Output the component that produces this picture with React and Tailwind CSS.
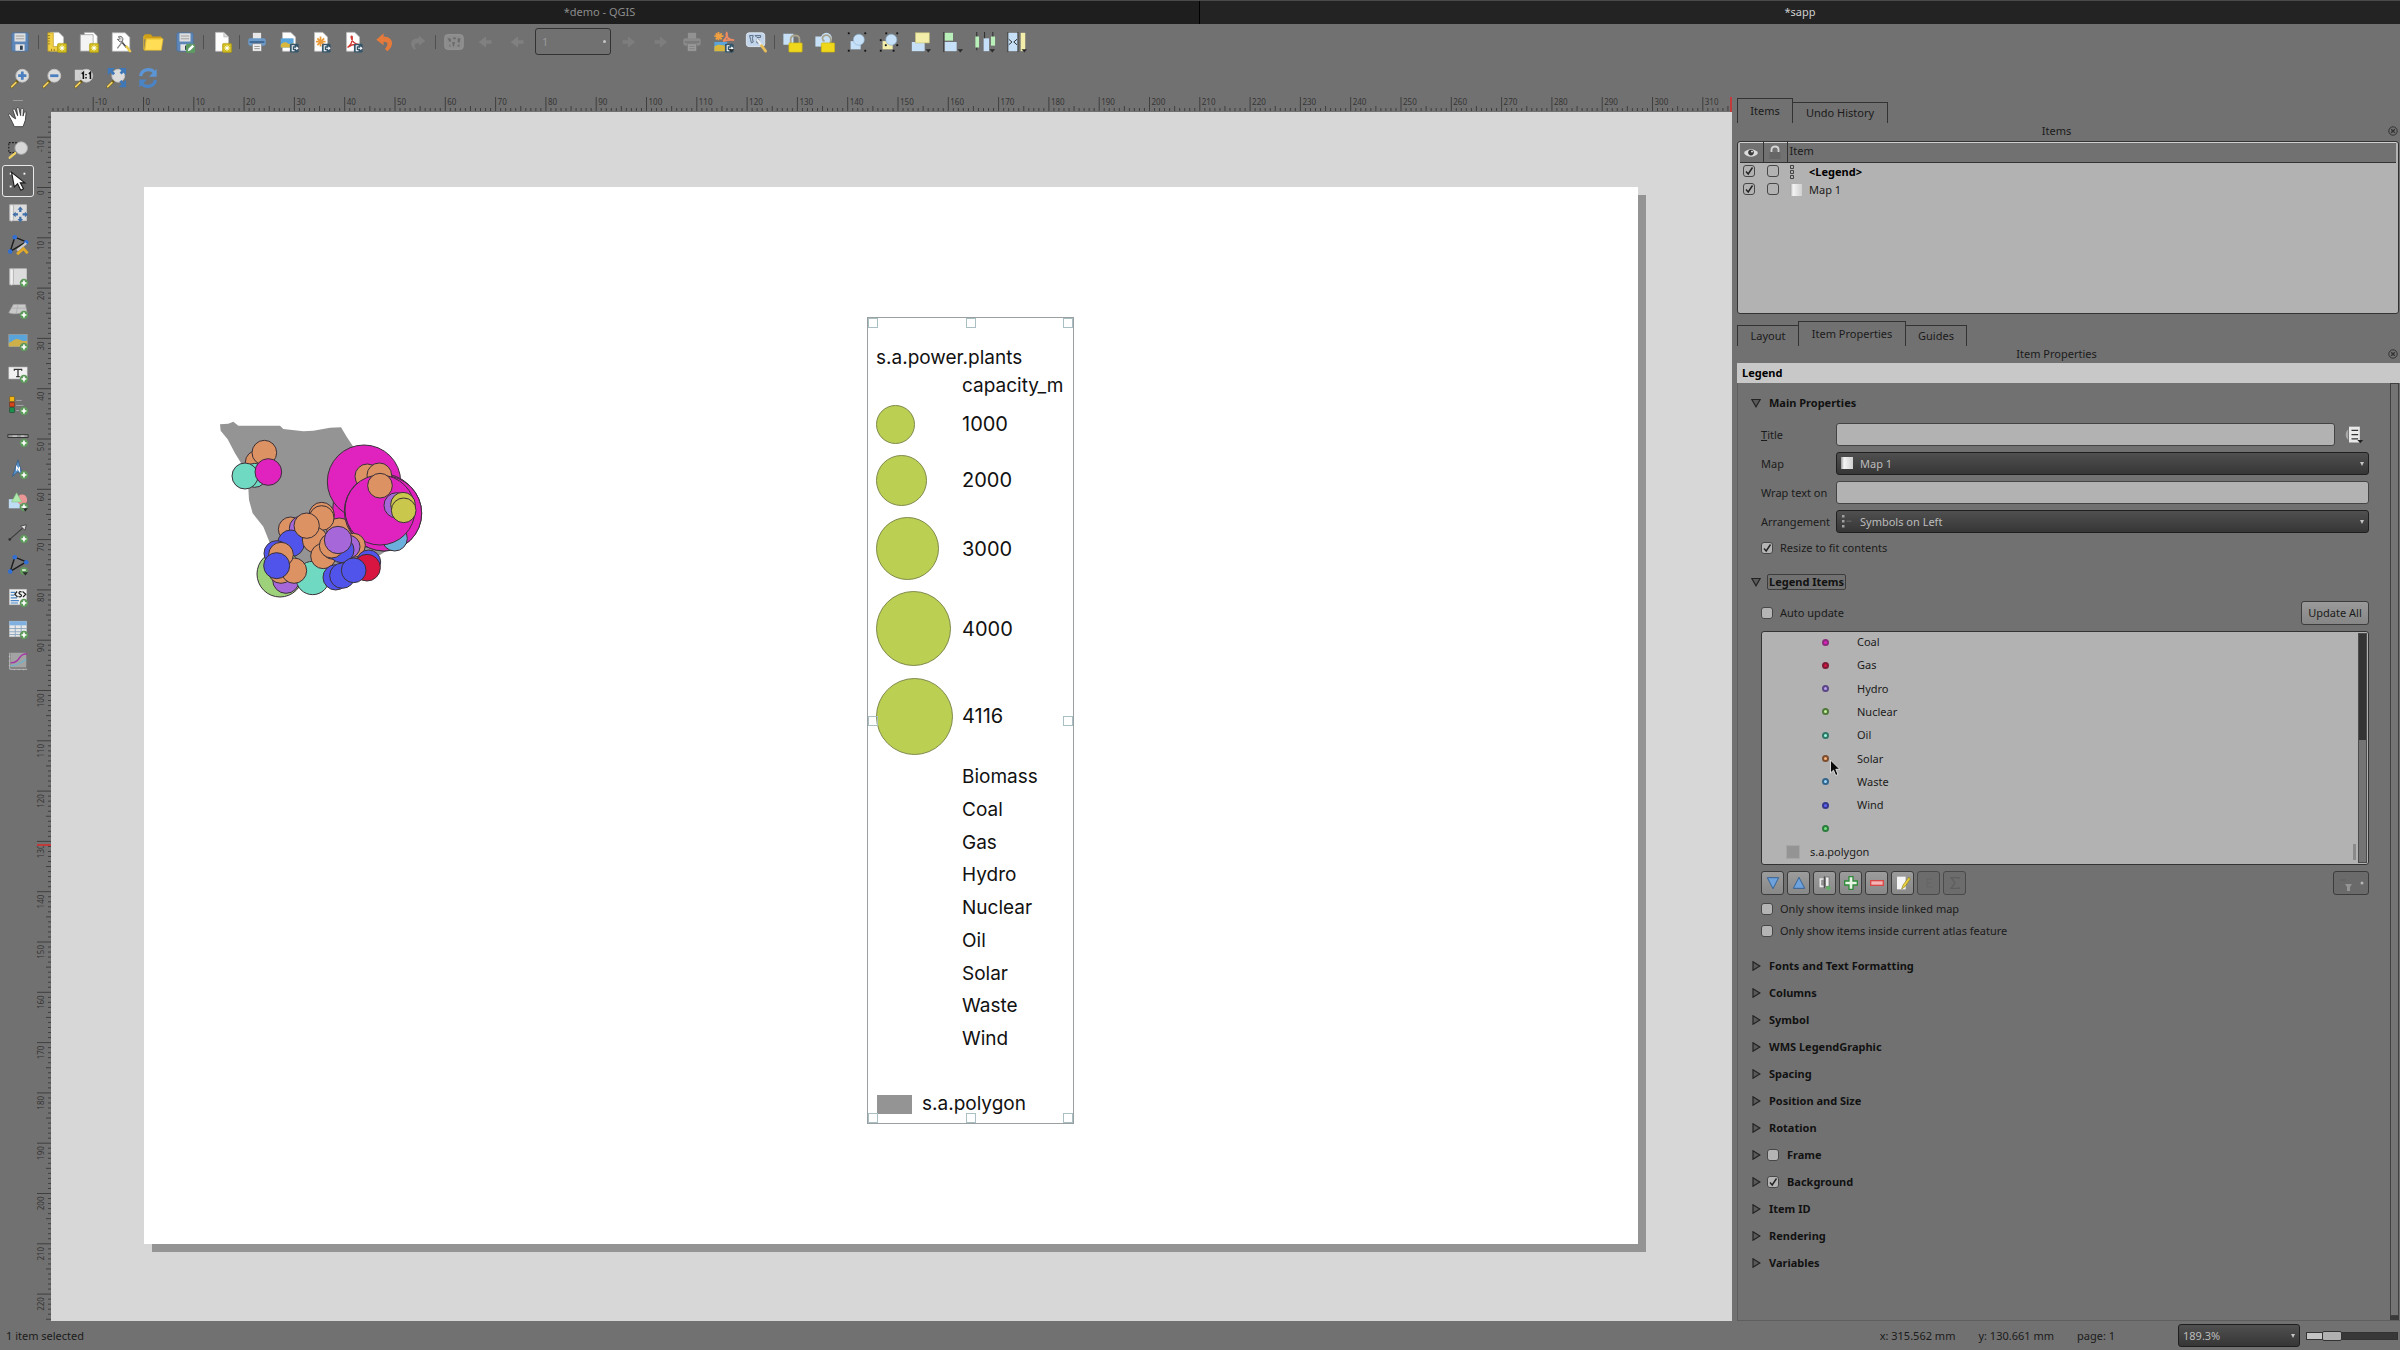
import React, { useState } from 'react';

const MM = 5.03;

const Icon = ({ children, className = 'w-6 h-6' }) => (
  <svg viewBox="0 0 24 24" className={className} fill="none" aria-hidden="true">{children}</svg>
);

/* ---------- shared icon parts ---------- */

const PlusBadge = () => (
  <g>
    <circle cx="18.5" cy="18.5" r="4.6" fill="#5f9a5c" />
    <path d="M18.5 15.8v5.4M15.8 18.5h5.4" stroke="#fff" strokeWidth="1.8" />
  </g>
);

const NewBadge = () => (
  <g>
    <rect x="12.5" y="13.5" width="10" height="10" rx="1.5" fill="#cdb91c" stroke="#a8960c" strokeWidth=".6" />
    <path d="M17.5 15v7M14 18.5h7M15 16l5 5M20 16l-5 5" stroke="#fff8b0" strokeWidth="1" />
    <circle cx="17.5" cy="18.5" r="1.7" fill="#fff" />
  </g>
);

const ExportBadge = () => (
  <g>
    <rect x="13" y="14" width="9.5" height="9.5" rx="1.5" fill="#35566b" />
    <path d="M18 16h-2.500v5.500H18M17.500 18.800h4M20 17.200l1.700 1.600-1.700 1.600" stroke="#fff" strokeWidth="1.1" />
  </g>
);

const Lens = () => (
  <g>
    <path d="M3 21.500l6-6" stroke="#6b5a1c" strokeWidth="3.200" strokeLinecap="round" />
    <path d="M3 21.500l4.500-4.500" stroke="#f0d264" strokeWidth="2" strokeLinecap="round" />
    <circle cx="14.500" cy="9.500" r="7" fill="#dcdcdc" stroke="#c2c2c2" />
  </g>
);

const Floppy = () => (
  <g>
    <rect x="3" y="2" width="18" height="20" rx="1.500" fill="#5c86b8" stroke="#4a6f9c" strokeWidth=".7" />
    <rect x="6" y="2.500" width="12" height="9" fill="#dedede" />
    <path d="M7.500 5.500h9M7.500 8.500h9" stroke="#9a9a9a" />
    <rect x="7" y="14.500" width="10" height="7" fill="#e4e4e4" />
    <rect x="12" y="16" width="3" height="4.500" fill="#2d3c50" />
  </g>
);

const Sheet = () => (
  <path d="M5 1.500h9l5 5v15.500H5z" fill="#fff" stroke="#c9c9c9" strokeWidth=".7" />
);

const Printer = ({ off }) => (
  <g>
    <rect x="7.500" y="2" width="9" height="7" fill={off ? '#929292' : '#e8e8e8'} />
    <rect x="2.500" y="8" width="19" height="8" rx="2" fill={off ? '#8a8a8a' : '#6b9ac9'} />
    <rect x="4" y="11" width="16" height="2" fill={off ? '#7a7a7a' : '#3f6690'} />
    <rect x="7" y="14" width="10" height="8" fill={off ? '#9a9a9a' : '#f2f2f2'} stroke="#717171" strokeWidth=".6" />
    <path d="M9 16.800h6M9 19.300h6" stroke="#808080" strokeWidth=".9" />
  </g>
);

const DropMark = () => <path d="M17 20h6l-3 3.500z" fill="#2b2b2b" />;

const Nodes = () => (
  <g fill="#111">
    <rect x="2" y="1.500" width="2" height="2" /><rect x="20" y="1.500" width="2" height="2" />
    <rect x="2" y="20.500" width="2" height="2" /><rect x="20" y="20.500" width="2" height="2" />
  </g>
);

const NodeTriangle = () => (
  <g>
    <path d="M8.500 3.500L21 8.500L3.500 19z" stroke="#1c1c1c" strokeWidth="1.500" fill="#777" />
    <circle cx="8.500" cy="3.500" r="2.500" fill="#2f6fd6" />
    <circle cx="21" cy="9" r="2.500" fill="#2f6fd6" />
    <circle cx="3.500" cy="19" r="2.500" fill="#2f6fd6" />
  </g>
);

const MapSheet = () => (
  <g>
    <rect x="3" y="3" width="18.500" height="17.500" fill="#dcdcdc" stroke="#c6c6c6" strokeWidth=".6" />
    <path d="M3 3h4v15c0 2-1 3-2 3s-2-1-2-2.500z" fill="#efefef" stroke="#9c9c9c" strokeWidth=".7" />
  </g>
);

/* ---------- toolbar definitions ---------- */

const mainTools = [
  { name: 'Save Project', icon: <Floppy /> },
  { sep: true },
  { name: 'New Layout', icon: <g><Sheet /><path d="M2 2h6v15h5v5H2z" fill="#f0cf45" stroke="#b8961a" strokeWidth=".7" /><path d="M2 5h2.500M2 8h2.500M2 11h2.500M2 14h2.500M6 22v-2.500M9 22v-2.500" stroke="#7c6510" strokeWidth=".8" /><NewBadge /></g> },
  { name: 'Duplicate Layout', icon: <g><path d="M7 1.500h10l4 4v13H7z" fill="#fff" stroke="#aaa" strokeWidth=".8" /><path d="M2.500 4h14v18h-14z" fill="#f4f4f4" stroke="#999" strokeWidth=".8" /><NewBadge /></g> },
  { name: 'Layout Manager', icon: <g><path d="M2.500 2h14l5 5v15h-19z" fill="#fff" stroke="#bbb" strokeWidth=".7" /><path d="M12 11l6 7" stroke="#4c4c4c" strokeWidth="1.800" /><path d="M18 17l4 5" stroke="#e8c94a" strokeWidth="2.600" strokeLinecap="round" /><path d="M9 6.500c1.800-1.500 4.500-.5 5 1.800s-1.200 4-3 3.700l-3-3 2 .2 1-1.200z" fill="#ddd" stroke="#555" strokeWidth=".9" /><path d="M8 19l6-8" stroke="#8b8b8b" strokeWidth="1.400" /></g> },
  { name: 'Add Items from Template', icon: <g><path d="M2 5.500c0-1 .8-2 2-2h5.500l2 2.500H20c1 0 1.500.8 1.500 1.500V9H2z" fill="#cf9f16" /><path d="M4.500 8.500h18.500l-2 12.500H3z" fill="#ffdd55" stroke="#e0b52b" strokeWidth=".7" /><path d="M2 5.500V20l1 1 1.600-12.500H21V7.500" stroke="#e8bd30" strokeWidth="1" /></g> },
  { name: 'Save as Template', icon: <g><Floppy /><rect x="13" y="14" width="10" height="10" rx="2" fill="#5c9a62" /><path d="M15 22l1-3 4-4 2 2-4 4z" fill="#fff" /></g> },
  { sep: true },
  { name: 'Add Pages', icon: <g><Sheet /><path d="M14 1.500v5h5" fill="#ddd" stroke="#b0b0b0" strokeWidth=".7" /><NewBadge /></g> },
  { sep: true, thin: true },
  { name: 'Print', icon: <Printer /> },
  { name: 'Export as Image', icon: <g><Sheet /><rect x="3" y="8" width="14" height="10" fill="#5aa4dc" /><path d="M3 15c3-4 6-3 8-1.500s4 .5 6-.5v5H3z" fill="#d8b73c" /><ExportBadge /></g> },
  { name: 'Export as SVG', icon: <g><Sheet /><path d="M11.500 6v11M6.500 11.500h10.500M8 8l7.500 7.500M15.500 8L8 15.500" stroke="#eb9a3a" strokeWidth="1.900" /><ExportBadge /></g> },
  { name: 'Export as PDF', icon: <g><Sheet /><path d="M6 18c4-3 5.500-8 5.200-11.500-.2-1.500-1.600-1-1.200.7.8 3.800 4 7.300 8 7.500-4-.8-8 .3-12 3.300z" stroke="#d13c35" strokeWidth="1.500" /><ExportBadge /></g> },
  { name: 'Undo', icon: <path d="M10.500 2.500L2.500 9.500l8 6v-3.700c4.500-.4 6 3.200 1.500 7.800l2.500 2.400c8-5.500 7-15.500-4-16z" fill="#e57a3a" /> },
  { name: 'Redo', icon: <path d="M14 5l7 6-7 5v-3c-4.500-.2-6 3-3 6.500l-2 1C3 15 5 8 14 8z" fill="#7f7f7f" /> },
  { sep: true },
  { name: 'Preview Atlas', icon: <g><rect x="2" y="4" width="20" height="16" rx="3" fill="#8c8c8c" stroke="#999" /><path d="M5 8h3l1 3-2 1zM11 7h3v2h-3zM16 8h3l-1 5-2-1zM10 12h3l-1 5h-1zM7 15h1v2H7zM16 15h2v2h-2z" fill="#6b6b6b" /></g> },
  { name: 'First Feature', icon: <path d="M4 12l8-6v4h6v4h-6v4z" fill="#808080" /> },
  { name: 'Previous Feature', icon: <path d="M4 12l8-6v4h6v4h-6v4z" fill="#808080" /> },
  { combo: true },
  { name: 'Next Feature', icon: <path d="M20 12l-8-6v4H6v4h6v4z" fill="#7d7d7d" /> },
  { name: 'Last Feature', icon: <path d="M20 12l-8-6v4H6v4h6v4z" fill="#7d7d7d" /> },
  { name: 'Print Atlas', icon: <Printer off /> },
  { name: 'Export Atlas', icon: <g><path d="M6 1v9M1.500 5.500h10M3 2.500l6.500 6.500M9.500 2.500L3 9" stroke="#f0a040" strokeWidth="2" /><path d="M11 11c4-3 5-8 4-9-1.500 4 2 8 8 8-5-1-8 0-12 1z" stroke="#f08a60" strokeWidth="2" /><rect x="1.500" y="12" width="14" height="10" fill="#5aa4dc" /><path d="M1.500 17c4-3 8-2 14 0v5h-14z" fill="#d8b73c" /><ExportBadge /><DropMark /></g> },
  { name: 'Atlas Settings', icon: <g><rect x="1.500" y="2" width="20" height="15" rx="3" fill="#c3d5ea" stroke="#dfe9f4" /><path d="M5 5h4l-1 3 1 4-2 1-1-4zM11 5h6v2h-4zM13 9h2v4h-2z" stroke="#51657c" strokeWidth="1" /><path d="M13 9l6 8" stroke="#eee" strokeWidth="2.400" /><path d="M18 16l4.500 6" stroke="#e6bd58" strokeWidth="3" strokeLinecap="round" /></g> },
  { sep: true },
  { name: 'Lock Selected Items', icon: <g><rect x="1.500" y="3" width="11" height="12" fill="#c5e0f7" /><path d="M9.500 14V9c0-5.500 9.500-5.500 9.500 0v5" stroke="#a9a38c" strokeWidth="2" /><rect x="7.500" y="13" width="14.500" height="10" rx="1" fill="#efd81c" stroke="#cdb60d" strokeWidth=".7" /></g> },
  { name: 'Unlock All Items', icon: <g><rect x="1.500" y="6" width="9" height="11" fill="#c5e0f7" /><circle cx="13.500" cy="8" r="6" fill="#c5e0f7" /><path d="M17.500 13.500c3-6-2-10.500-6-8.500-3 1.600-3 5 0 6" stroke="#a9a38c" strokeWidth="1.900" /><rect x="8" y="13" width="14.500" height="10" rx="1" fill="#efd81c" stroke="#cdb60d" strokeWidth=".7" /></g> },
  { name: 'Group Items', icon: <g><path d="M5 11h11v9H5z" fill="#c5e0f7" /><circle cx="14" cy="9.500" r="6" fill="#c5e0f7" stroke="#8fb0cc" strokeWidth=".7" /><Nodes /></g> },
  { name: 'Ungroup Items', icon: <g><path d="M5 11h11v9H5z" fill="#f3efab" /><circle cx="14.500" cy="9.500" r="6" fill="#c5e0f7" stroke="#8fb0cc" strokeWidth=".7" /><g fill="#111"><rect x="8" y="1.500" width="2" height="2" /><rect x="20" y="1.500" width="2" height="2" /><rect x="2" y="9" width="2" height="2" /><rect x="20" y="14.500" width="2" height="2" /><rect x="7.500" y="14.500" width="2" height="2" /><rect x="2" y="20.500" width="2" height="2" /><rect x="16" y="20.500" width="2" height="2" /></g></g> },
  { name: 'Raise Selected Items', icon: <g><rect x="2" y="12" width="14" height="10" fill="#c5e0f7" /><rect x="6" y="2" width="15" height="11" fill="#f3efab" stroke="#c9c47c" strokeWidth=".7" /><DropMark /></g> },
  { name: 'Align Selected Items', icon: <g><path d="M2 1v22" stroke="#333" strokeWidth="1.200" /><rect x="3" y="2" width="9" height="8.500" fill="#b9efb9" /><rect x="3" y="12" width="13" height="10" fill="#c5e0f7" /><DropMark /></g> },
  { name: 'Distribute Items', icon: <g><path d="M3 1v20M11.500 1v20M20.500 1v14" stroke="#333" strokeWidth="1.200" /><rect x="1.500" y="6" width="4" height="12" fill="#b9efb9" /><rect x="10.500" y="8" width="6" height="14" fill="#c5e0f7" /><rect x="18.500" y="6" width="4.500" height="10" fill="#b9efb9" /><DropMark /></g> },
  { name: 'Resize Items', icon: <g><rect x="2" y="2" width="11" height="20" fill="#c5e0f7" /><rect x="16" y="2" width="5" height="20" fill="#f3efab" /><path d="M2 1v22M13 1v22" stroke="#333" strokeWidth="1" /><path d="M3 9l3.500 3L3 15M12 9l-3.500 3 3.500 3" stroke="#222" strokeWidth="1" /><DropMark /></g> },
];

const viewTools = [
  { name: 'Zoom In', icon: <g><Lens /><path d="M14.500 5v9M10 9.500h9" stroke="#4a7fc0" strokeWidth="3" /></g> },
  { name: 'Zoom Out', icon: <g><Lens /><path d="M10 9.500h9" stroke="#4a7fc0" strokeWidth="3" /></g> },
  { name: 'Zoom to 100%', icon: <g><rect x="2" y="3" width="10" height="12" fill="#d0d0d0" /><Lens /><path d="M9.500 7.500l1.800-1.500v7M17.300 7.500l1.700-1.500v7" stroke="#111" strokeWidth="1.700" /><path d="M14.200 7.500v1.500M14.200 11v1.500" stroke="#111" strokeWidth="1.700" /></g> },
  { name: 'Zoom Full', icon: <g><Lens /><path d="M5 3l5 5M21 3l-4 4M21 20l-4-5" stroke="#3f78b8" strokeWidth="3" /><path d="M3 1h8l-8 8zM23 1h-8l8 8zM23 22h-8l8-8z" fill="#3f78b8" /></g> },
  { name: 'Refresh', icon: <g><path d="M4 10c1-8 11-9 15-4" stroke="#5b95d6" strokeWidth="3.500" /><path d="M21.500 2v8.500h-8.500z" fill="#5b95d6" /><path d="M20 14c-1 8-11 9-15 4" stroke="#4a84c6" strokeWidth="3.500" /><path d="M2.500 22v-8.500H11z" fill="#4a84c6" /></g> },
];

const sideTools = [
  { name: 'Pan Layout', icon: <path d="M6 12L3.500 9c-1.200-1-2.200 0-1.500 1.500L6 18l2 4.500h9.500l2.500-7 .8-8c0-1.800-2-1.800-2.300 0L17.500 11l.3-7c0-2-2.500-2-2.600 0l-.3 6.500L13 2.800c-.4-1.800-2.800-1.500-2.400.5l1 7.300-2.700-6.500c-.8-1.600-2.800-.8-2.300.9L9.500 14z" fill="#fff" stroke="#333" strokeWidth=".9" /> },
  { name: 'Zoom', icon: <g><path d="M2 5h8v11H2z" stroke="#1b1b1b" strokeWidth="1.200" strokeDasharray="2 1.500" /><path d="M3 21.500l6-5" stroke="#f0d264" strokeWidth="2.600" strokeLinecap="round" /><circle cx="15.500" cy="11" r="6.800" fill="#d8d8d8" stroke="#b2b2b2" /></g> },
  { name: 'Select/Move Item', active: true, icon: <g><g fill="#fff"><rect x="3" y="3" width="2" height="2" /><rect x="18" y="3" width="2" height="2" /><rect x="3" y="17" width="2" height="2" /></g><path d="M5 2.500l3 16 3.500-3.500 3.500 7 3-1.500-3.500-6.500h5z" fill="#fff" stroke="#1a1a1a" strokeWidth="1.200" /></g> },
  { name: 'Move Item Content', icon: <g><MapSheet /><path d="M14.500 5l3 3.500h-6zM14.500 22l3-3.500h-6zM6 13.500l3.500-3v6zM23 13.500l-3.500-3v6z" fill="#3f6fa8" /><path d="M14.500 8v3M14.500 19v-3M9 13.500h3M20 13.500h-3" stroke="#3f6fa8" strokeWidth="2.500" /></g> },
  { name: 'Edit Nodes Item', icon: <g><NodeTriangle /><path d="M21 10L11 18" stroke="#c9c9c9" strokeWidth="2.500" /><path d="M11 22l7-6 4.500 5" stroke="#e0a92a" strokeWidth="3" /></g> },
  { name: 'Add Map', icon: <g><MapSheet /><PlusBadge /></g> },
  { name: 'Add 3D Map', icon: <g><path d="M7 7h13l2 10c-6-2-12 2-20-1z" fill="#c9c9c9" stroke="#a8a8a8" strokeWidth=".8" /><path d="M5 11h16M12 7l-2 10" stroke="#aaa" strokeWidth=".8" /><PlusBadge /></g> },
  { name: 'Add Picture', icon: <g><rect x="2" y="5" width="20" height="13" fill="#5aa4dc" stroke="#a9a9a9" strokeWidth=".6" /><path d="M2 14c4-1 6-5 10-4s6 3 10 1.500V18H2z" fill="#cdb04a" /><PlusBadge /></g> },
  { name: 'Add Label', icon: <g><rect x="2" y="5.500" width="20" height="13" fill="#f1f1f1" stroke="#bbb" strokeWidth=".6" /><path d="M8 9.500V8h8v1.500M12 8v8M10 16h4" stroke="#333" strokeWidth="1.400" /><PlusBadge /></g> },
  { name: 'Add Legend', icon: <g><rect x="3" y="3" width="5" height="5" fill="#f1b514" stroke="#7a5d0b" strokeWidth=".6" /><rect x="3" y="9" width="5" height="5" fill="#d4451b" stroke="#6e240e" strokeWidth=".6" /><rect x="3" y="15" width="5" height="5" fill="#1d8f4a" stroke="#0b4724" strokeWidth=".6" /><path d="M10 7h6M10 12.500h8M10 18h3" stroke="#a8a8a8" strokeWidth="1" /><PlusBadge /></g> },
  { name: 'Add Scale Bar', icon: <g><rect x="1" y="9.500" width="22" height="3" fill="#9a9a9a" stroke="#252525" strokeWidth=".9" /><path d="M6 11h5M15 11h4" stroke="#ddd" strokeWidth="1" /><PlusBadge /></g> },
  { name: 'Add North Arrow', icon: <g><path d="M12 2l5 17-5-4-6 5z" fill="#5a93cc" stroke="#2f5b88" strokeWidth=".8" /><path d="M10.500 14V9.500l3 4.500V9.500" stroke="#fff" strokeWidth="1.200" /><PlusBadge /></g> },
  { name: 'Add Shape', icon: <g><rect x="2" y="10" width="12" height="10" fill="#bfdcf5" /><circle cx="16.500" cy="10.500" r="5.500" fill="#eb9696" /><path d="M10.500 3l5.500 10H5z" fill="#aeeaae" stroke="#7dbb7d" strokeWidth=".6" /><PlusBadge /><DropMark /></g> },
  { name: 'Add Arrow', icon: <g><path d="M3 19L19 5" stroke="#3a3a3a" strokeWidth="1.200" /><circle cx="3" cy="19" r="1.500" fill="#333" /><path d="M15 4.500l6-1.500-1.500 6z" fill="#ddd" stroke="#333" strokeWidth=".8" /><PlusBadge /></g> },
  { name: 'Add Node Item', icon: <g><NodeTriangle /><circle cx="18.500" cy="18.500" r="4.200" fill="#5f9a5c" /><path d="M16.500 17.500h4" stroke="#fff" strokeWidth="1.500" /><DropMark /></g> },
  { name: 'Add HTML', icon: <g><rect x="2.500" y="3.500" width="19" height="17" fill="#f0f0f0" stroke="#bbb" strokeWidth=".6" /><path d="M4 7h5M4 10h4M4 13h7M4 16h9M4 18.500h8" stroke="#4a86c5" strokeWidth="1.200" /><path d="M11 6l-2.500 3 3 3M17 6l3.500 3-3 3M16 6.500c-3-1-4 1.500-1.500 2.500s1 3.500-2 2.500" stroke="#222" strokeWidth="1.300" /><PlusBadge /></g> },
  { name: 'Add Fixed Table', icon: <g><rect x="2.500" y="3.500" width="19" height="17" fill="#e8e8e8" stroke="#bbb" strokeWidth=".6" /><rect x="2.500" y="3.500" width="19" height="4.500" fill="#7fb0df" /><path d="M2.500 11.500h19M2.500 15h19M2.500 18h19M9 8v12.500M15.500 8v12.500" stroke="#8aa5be" strokeWidth="1" /><PlusBadge /></g> },
  { name: 'Add Elevation Profile', icon: <g><rect x="4" y="3" width="17" height="16" fill="#a3a3a3" /><path d="M3 3v18h19M2 7h1.500M2 12h1.500M2 17h1.500M8 22v-1M13 22v-1M18 22v-1" stroke="#c5c5c5" strokeWidth="1" /><path d="M4 17c6 1 8-3 11-3l6-4" stroke="#6fb3c9" strokeWidth="1.400" /><path d="M4 14c6 0 8-3 10-6s4-4 8-4" stroke="#a23aa5" strokeWidth="1.700" /></g> },
];

/* ---------- small controls ---------- */

const ToolButton = ({ tool }) => (
  <button
    type="button"
    aria-label={tool.name}
    title={tool.name}
    className={`w-8 h-8 shrink-0 flex items-center justify-center rounded-[3px] border ${tool.active ? 'border-[#e8e8e8] bg-[#656565]' : 'border-transparent'}`}
  >
    <Icon className="w-[22px] h-[22px]">{tool.icon}</Icon>
  </button>
);

const Check = ({ id, label, defaultChecked = false, plain = false }) => (
  <span className="relative inline-flex w-3 h-3 shrink-0">
    <input
      id={id}
      type="checkbox"
      aria-label={label}
      defaultChecked={defaultChecked}
      className={`peer appearance-none w-3 h-3 rounded-[3px] border border-[#474747] ${plain ? 'bg-transparent' : 'bg-[#b4b4b4]'}`}
    />
    <svg viewBox="0 0 12 12" className="absolute inset-0 w-3 h-3 pointer-events-none invisible peer-checked:visible" fill="none" aria-hidden="true">
      <path d="M3 6.500l2.200 2.500L9.500 2.500" stroke="#222" strokeWidth="1.400" />
    </svg>
  </span>
);

const LabelledCheck = ({ id, label, defaultChecked }) => (
  <div className="flex items-center gap-[7px] h-4">
    <Check id={id} defaultChecked={defaultChecked} />
    <label htmlFor={id}>{label}</label>
  </div>
);

const Combo = ({ id, options, icon, label, className = '' }) => (
  <div className={`relative flex ${className}`}>
    <select
      id={id}
      aria-label={label}
      className={`appearance-none w-full h-[23px] rounded-[3px] border border-[#1f1f1f] bg-linear-to-b from-[#505050] to-[#363636] text-[#bcbcbc] ${icon ? 'pl-[23px]' : 'pl-1'}`}
    >
      {options.map((o) => <option key={o}>{o}</option>)}
    </select>
    {icon && <span className="absolute left-1 top-1 pointer-events-none">{icon}</span>}
    <span className="absolute right-[5px] top-[10px] border-x-2 border-t-4 border-x-transparent border-t-[#c4c4c4] pointer-events-none" />
  </div>
);

const MapThumb = () => (
  <svg viewBox="0 0 14 14" className="w-[14px] h-[14px]" aria-hidden="true">
    <defs>
      <linearGradient id="thumb" x1="0" y1="0" x2="1" y2="0"><stop offset="0" stopColor="#9c9c9c" /><stop offset=".25" stopColor="#f4f4f4" /><stop offset="1" stopColor="#d0d0d0" /></linearGradient>
    </defs>
    <rect x="1" y="1" width="12" height="12" fill="url(#thumb)" />
  </svg>
);

const ListThumb = () => (
  <svg viewBox="0 0 14 14" className="w-[14px] h-[14px]" fill="none" aria-hidden="true">
    <path d="M2 1h2.500v2.500H2zM2 6h2.500v2.500H2zM2 11h2.500v2.500H2z" fill="#a0a0a0" />
    <path d="M6.500 7.200h5" stroke="#6a6a6a" />
  </svg>
);

const Tabs = ({ tabs, active, onChange }) => (
  <div className="flex items-end h-[27px]" role="tablist">
    {tabs.map((tab, i) => (
      <button
        key={tab.name}
        type="button"
        role="tab"
        aria-selected={active === i}
        onClick={() => onChange(i)}
        className={`${tab.width} border-t border-l border-[#333] last:border-r ${active === i ? 'h-[25px] border-r' : 'h-[21px]'} ${active === i - 1 ? 'border-l-0' : ''}`}
      >
        {tab.name}
      </button>
    ))}
  </div>
);

const DockTitle = ({ children }) => (
  <div className="flex items-center h-[17px] pr-[2px] pb-[2px]">
    <h2 className="flex-1 text-center pr-3">{children}</h2>
    <button type="button" aria-label={`Close ${children}`}>
      <svg viewBox="0 0 10 10" className="w-[10px] h-[10px]" fill="none" stroke="#333" aria-hidden="true">
        <circle cx="5" cy="5" r="4.200" />
        <path d="M3.200 3.200l3.600 3.600M6.800 3.200L3.200 6.800" strokeWidth="1.300" />
      </svg>
    </button>
  </div>
);

/* ---------- rulers ---------- */

const HorizontalRuler = () => (
  <svg className="block flex-1 h-4" aria-hidden="true">
    {Array.from({ length: 336 }, (_, i) => i - 18).map((mm) => {
      const x = 92.5 + mm * MM;
      const top = mm % 10 === 0 ? 1 : mm % 5 === 0 ? 10 : 12;
      return (
        <g key={mm}>
          <line x1={x} x2={x} y1={top} y2="15" stroke="#3f3f3f" />
          {mm % 10 === 0 && <text x={x + 2} y="9" fontSize="8" fill="#353535">{mm}</text>}
        </g>
      );
    })}
    <rect x="1679" y="1" width="2" height="15" fill="#c23a3a" />
  </svg>
);

const VerticalRuler = () => (
  <svg className="block w-[15px] shrink-0" aria-hidden="true">
    {Array.from({ length: 240 }, (_, i) => i - 14).map((mm) => {
      const y = 75.5 + mm * MM;
      const left = mm % 10 === 0 ? 1 : mm % 5 === 0 ? 10 : 12;
      return (
        <g key={mm}>
          <line x1={left} x2="15" y1={y} y2={y} stroke="#3f3f3f" />
          {mm % 10 === 0 && (
            <text transform={`translate(8 ${y + 3}) rotate(-90)`} textAnchor="end" fontSize="8" fill="#353535">{mm}</text>
          )}
        </g>
      );
    })}
    <rect x="1" y="732" width="14" height="2" fill="#c23a3a" />
  </svg>
);

/* ---------- layout page ---------- */

const colors = {
  solar: '#dc9262',
  oil: '#6fdac1',
  coal: '#e022bf',
  hydro: '#a668d8',
  wind: '#5054ea',
  nuclear: '#9dd17a',
  gas: '#d81440',
  waste: '#6bb0dc',
  biomass: '#c9c84c',
};

const plants = [
  [232, 187, 36, 'solar'], [224, 226, 36, 'oil'], [253, 158, 37, 'solar'], [195, 228, 39, 'oil'], [265, 216, 40, 'coal'],
  [570, 330, 112, 'coal'], [552, 245, 110, 'coal'], [612, 340, 113, 'coal'], [478, 392, 38, 'solar'], [606, 334, 113, 'coal'], [612, 340, 113, 'coal'],
  [644, 415, 38, 'waste'], [562, 229, 37, 'solar'], [598, 226, 37, 'solar'], [600, 330, 105, 'coal'], [600, 257, 37, 'solar'],
  [650, 316, 38, 'hydro'], [669, 314, 37, 'biomass'], [671, 331, 37, 'biomass'],
  [332, 388, 37, 'solar'], [425, 345, 38, 'solar'], [365, 385, 37, 'hydro'], [425, 354, 37, 'solar'],
  [333, 430, 40, 'wind'], [405, 420, 38, 'solar'], [380, 377, 38, 'solar'],
  [300, 522, 69, 'nuclear'], [318, 540, 40, 'hydro'], [398, 534, 50, 'oil'], [430, 468, 38, 'solar'],
  [303, 511, 39, 'solar'], [342, 512, 38, 'solar'], [290, 460, 38, 'wind'], [303, 464, 37, 'solar'], [290, 497, 39, 'wind'],
  [520, 436, 36, 'solar'], [506, 440, 34, 'hydro'], [460, 440, 38, 'hydro'], [484, 450, 38, 'wind'], [455, 437, 37, 'solar'], [474, 420, 41, 'hydro'],
  [566, 486, 36, 'wind'], [561, 503, 40, 'gas'], [467, 532, 38, 'wind'], [487, 527, 38, 'wind'], [521, 511, 37, 'wind'],
];

const MapItem = () => (
  <svg viewBox="0 0 840 660" className="absolute left-9 top-[213px] w-[280px] h-[220px]" role="img" aria-label="Map 1">
    <path d="M120 73L145 71L160 65L175 77L300 77L310 87L370 94L400 92L450 83L483 82L500 110L520 140L640 260L700 400L600 465L560 490L500 525L400 515L285 490L268 425L250 380L218 340L207 300L205 265L190 200L165 160L143 118L122 92Z" fill="#949494" />
    {plants.map(([cx, cy, r, type], i) => (
      <circle key={i} cx={cx} cy={cy} r={r} fill={colors[type]} stroke="#3a3038" strokeWidth="3" />
    ))}
  </svg>
);

const sizes = [
  { label: '1000', box: 'w-[39px] h-[39px]', row: 'h-[48px]' },
  { label: '2000', box: 'w-[51px] h-[51px]', row: 'h-[64px]' },
  { label: '3000', box: 'w-[63px] h-[63px]', row: 'h-[73px]' },
  { label: '4000', box: 'w-[75px] h-[75px]', row: 'h-[87px]' },
  { label: '4116', box: 'w-[77px] h-[77px]', row: 'h-[88px]' },
];

const categories = ['Biomass', 'Coal', 'Gas', 'Hydro', 'Nuclear', 'Oil', 'Solar', 'Waste', 'Wind'];

const handles = [
  'left-0 top-0', 'left-1/2 -translate-x-1/2 top-0', 'right-0 top-0',
  'left-0 top-1/2 -translate-y-1/2', 'right-0 top-1/2 -translate-y-1/2',
  'left-0 bottom-0', 'left-1/2 -translate-x-1/2 bottom-0', 'right-0 bottom-0',
];

const LegendItem = () => (
  <div className="absolute left-[723px] top-[130px] w-[207px] h-[807px] border border-[#9a9fa2] bg-white pl-2 pt-[26px] font-['Inter',sans-serif] text-[19px] leading-7 text-[#111]">
    {handles.map((pos) => <span key={pos} className={`absolute ${pos} w-[10px] h-[10px] border border-[#a9bfc4]`} />)}
    <p>s.a.power.plants</p>
    <p className="pl-[86px]">capacity_m</p>
    {sizes.map((s) => (
      <div key={s.label} className={`flex items-center text-[20px] ${s.row}`}>
        <span className="w-[86px]"><span className={`block ${s.box} rounded-full bg-[#bbcf53] border border-[#7f8a4a]`} /></span>
        {s.label}
      </div>
    ))}
    <ul className="mt-[3px] pl-[86px] flex flex-col justify-between h-[290px]">
      {categories.map((c) => <li key={c}>{c}</li>)}
    </ul>
    <div className="flex items-center gap-[10px] mt-[37px] pl-px">
      <span className="w-[35px] h-[19px] bg-[#949494]" />
      s.a.polygon
    </div>
  </div>
);

/* ---------- right hand panels ---------- */

const layoutItems = [
  { name: '<Legend>', icon: 'list', selected: true },
  { name: 'Map 1', icon: 'map' },
];

const ItemsPanel = () => (
  <div className="h-[173px] rounded-[3px] border border-[#333] bg-[#b2b2b2] p-[2px] pt-0">
    <table className="w-full table-fixed border-collapse text-left">
      <thead>
        <tr className="h-[20px] bg-[#717171] border-t border-[#d0d0d0] align-top">
          <th className="w-[23px] pt-[5px] border-b border-r border-[#333]">
            <svg viewBox="0 0 14 10" className="w-[14px] h-[10px] mx-auto" role="img" aria-label="Visible"><path d="M0 5C3 0 11 0 14 5 11 10 3 10 0 5z" fill="#ddd" /><circle cx="7" cy="4.600" r="2.800" fill="#3a3a3a" /><circle cx="8" cy="3.600" r=".9" fill="#fff" /></svg>
          </th>
          <th className="w-[24px] pt-[2px] border-b border-r border-[#333]">
            <svg viewBox="0 0 14 14" className="w-[14px] h-[14px] mx-auto" fill="none" role="img" aria-label="Locked"><path d="M3.500 8V4.500c0-4 7-4 7 0V8" stroke="#d4d4d4" strokeWidth="1.800" /><rect x="1.500" y="7" width="11" height="7" fill="#666" /></svg>
          </th>
          <th className="border-b border-[#333] font-normal pl-[2px]">Item</th>
        </tr>
      </thead>
      <tbody>
        {layoutItems.map((item) => (
          <tr key={item.name} className="h-[18px]">
            <td className="pl-[3px] pt-[2px]"><Check label={`${item.name} visible`} defaultChecked plain /></td>
            <td className="pl-1 pt-[2px]"><Check label={`${item.name} locked`} plain /></td>
            <td>
              <div className="flex items-center gap-[6px] pl-[2px]">
                {item.icon === 'list' ? (
                  <svg viewBox="0 0 14 14" className="w-[14px] h-[14px]" fill="none" stroke="#444" aria-hidden="true"><path d="M1.500 .5h3v3h-3zM1.500 5.500h3v3h-3zM1.500 10.500h3v3h-3z" /></svg>
                ) : <MapThumb />}
                <span className={item.selected ? 'font-bold text-black' : ''}>{item.name}</span>
              </div>
            </td>
          </tr>
        ))}
      </tbody>
    </table>
  </div>
);

const treeRows = [
  { name: 'Coal', dot: 'bg-[#e022bf] border-[#8a2a7c]' },
  { name: 'Gas', dot: 'bg-[#d81440] border-[#7c1c36]' },
  { name: 'Hydro', dot: 'bg-[#b9a0ec] border-[#5b4587]' },
  { name: 'Nuclear', dot: 'bg-[#c5f09e] border-[#50793a]' },
  { name: 'Oil', dot: 'bg-[#9bf8e0] border-[#2f7667]' },
  { name: 'Solar', dot: 'bg-[#f8b480] border-[#7e4d2e]' },
  { name: 'Waste', dot: 'bg-[#9cd6fc] border-[#33658a]' },
  { name: 'Wind', dot: 'bg-[#6064fa] border-[#36388a]' },
  { name: '', dot: 'bg-[#6fe480] border-[#2c7b3c]' },
];

const LegendTree = () => (
  <div className="relative mt-[6px] h-[234px] flex rounded-[3px] border border-[#333] bg-[#b2b2b2]">
    <ul className="flex-1 flex flex-col justify-between pt-[2px] pb-1">
      {treeRows.map((row) => (
        <li key={row.name} className="flex items-center h-4 pl-[60px] gap-[28px]">
          <span className={`w-[7px] h-[7px] rounded-full border-2 ${row.dot}`} />
          {row.name}
        </li>
      ))}
      <li className="flex items-center h-4 pl-6 gap-[10px]">
        <span className="w-[14px] h-[14px] bg-[#949494] border border-[#a6a6a6]" />
        s.a.polygon
        <span className="ml-auto mr-px w-[3px] h-4 bg-[#8a8a8a]" />
      </li>
    </ul>
    <div className="w-[9px] m-px bg-[#747474] border border-[#4c4c4c]">
      <div className="h-[106px] bg-[#343434]" />
    </div>
    <svg viewBox="0 0 12 18" className="absolute left-[67px] top-[127px] w-3 h-[18px]" aria-hidden="true">
      <path d="M1.500 1v13l3-2.800 2.200 5.300 2.300-1-2.200-5.200h4z" fill="#0a0a0a" stroke="#e6e6e6" strokeWidth=".9" />
    </svg>
  </div>
);

const treeButtons = [
  { name: 'Move down', icon: <path d="M3.500 4h17L12 20.500z" fill="#6ea2dc" stroke="#2c5a91" strokeWidth="1.300" /> },
  { name: 'Move up', icon: <path d="M3.500 20h17L12 3.500z" fill="#6ea2dc" stroke="#2c5a91" strokeWidth="1.300" /> },
  { name: 'Add group', icon: <g><path d="M10 6H5v11h5" stroke="#e8e8e8" strokeWidth="2.500" /><path d="M11 2v18" stroke="#444" strokeWidth="1.500" /><rect x="13" y="3" width="5" height="14" fill="#eee" stroke="#666" /><path d="M17 16v7M13.500 19.500h7" stroke="#56b35a" strokeWidth="2.500" /></g> },
  { name: 'Add layer', icon: <path d="M9 2.500h6V9h6.500v6H15v6.500H9V15H2.500V9H9z" fill="#e8f4e4" stroke="#2f8a3a" strokeWidth="2" /> },
  { name: 'Remove layer', icon: <rect x="2.500" y="8.500" width="19" height="7" fill="#f6b6b6" stroke="#d84848" strokeWidth="2" /> },
  { name: 'Edit item', icon: <g><path d="M3 2.500h13v19H3z" fill="#f6f6f6" /><path d="M21 3L12 15l-2 6 5-3.500L23 6z" fill="#e8cf3f" stroke="#8a7a1c" strokeWidth=".9" /></g> },
  { name: 'Show feature count', disabled: true, icon: <path d="M16 6H9v12h8M9 12h6" stroke="#646464" strokeWidth="1.500" /> },
  { name: 'Expression', disabled: true, icon: <path d="M18 6V4H6l6 8-6 8h12v-2" stroke="#5d5d5d" strokeWidth="1.800" /> },
];

const Triangle = ({ open }) => (
  <svg viewBox="0 0 10 10" className="w-[10px] h-[10px] shrink-0" aria-hidden="true">
    <path d={open ? 'M.8 1.500h8.400L5 8.800z' : 'M2 .8v8.400L8.800 5z'} fill="#5a5a5a" stroke="#222" strokeWidth="1.200" />
  </svg>
);

const SectionHeader = ({ title, open, focused, check }) => (
  <div className="flex items-center h-5 pl-[13px] gap-[6px]">
    <button type="button" aria-label={`Toggle ${title}`}><Triangle open={open} /></button>
    {check !== undefined && <span className="flex"><Check label={title} defaultChecked={check} /></span>}
    <h3 className={`font-bold text-[#111] px-px rounded-[2px] border leading-[14px] ${focused ? 'border-[#3c3c3c]' : 'border-transparent'}`}>{title}</h3>
  </div>
);

const closedSections = [
  { title: 'Fonts and Text Formatting' },
  { title: 'Columns' },
  { title: 'Symbol' },
  { title: 'WMS LegendGraphic' },
  { title: 'Spacing' },
  { title: 'Position and Size' },
  { title: 'Rotation' },
  { title: 'Frame', check: false },
  { title: 'Background', check: true },
  { title: 'Item ID' },
  { title: 'Rendering' },
  { title: 'Variables' },
];

const inputClass = 'w-full h-[23px] rounded-[3px] border border-[#444] bg-[#b2b2b2] px-1';
const smallButton = 'h-[24px] rounded-[3px] border flex items-center justify-center';

const PropertiesPanel = () => (
  <div className="flex flex-1 border-l border-b border-[#5e5e5e]">
    <div className="flex-1 pt-[10px]">
      <SectionHeader title="Main Properties" open />
      <div className="pl-[23px] pr-[21px]">
        <div className="mt-[10px] grid grid-cols-[75px_1fr] gap-y-[6px] items-center">
          <label htmlFor="title"><span className="underline">T</span>itle</label>
          <div className="flex items-center gap-[9px]">
            <input id="title" type="text" className={inputClass} />
            <button type="button" aria-label="Data defined override" className="w-[25px] shrink-0">
              <Icon className="w-5 h-5">
                <path d="M5 5C1 9 1 14 5 18z" fill="#a8a8a8" />
                <path d="M6 2h13v19H6z" fill="#e9e9e9" />
                <path d="M9 6.500h8M9 11.500h8M9 16.500h8" stroke="#333" strokeWidth="1.500" />
                <path d="M16 18h7l-3.500 4z" fill="#222" />
              </Icon>
            </button>
          </div>
          <label htmlFor="map">Map</label>
          <Combo id="map" options={['Map 1']} icon={<MapThumb />} />
          <label htmlFor="wrap">Wrap text on</label>
          <input id="wrap" type="text" className={inputClass} />
          <label htmlFor="arrangement">Arrangement</label>
          <Combo id="arrangement" options={['Symbols on Left', 'Symbols on Right']} icon={<ListThumb />} />
        </div>
        <div className="mt-[7px]"><LabelledCheck id="resize" label="Resize to fit contents" defaultChecked /></div>
      </div>

      <div className="mt-4"><SectionHeader title="Legend Items" open focused /></div>
      <div className="pl-[23px] pr-[21px]">
        <div className="mt-[9px] flex items-center justify-between">
          <LabelledCheck id="auto-update" label="Auto update" />
          <button type="button" className={`${smallButton} w-[68px] border-[#3c3c3c] bg-linear-to-b from-[#9a9a9a] to-[#868686]`}>Update All</button>
        </div>
        <LegendTree />
        <div className="mt-[6px] flex gap-[3px]">
          {treeButtons.map((b) => (
            <button
              key={b.name}
              type="button"
              aria-label={b.name}
              disabled={b.disabled}
              className={`${smallButton} w-[23px] ${b.disabled ? 'border-[#4a4a4a] bg-[#6c6c6c]' : 'border-[#3c3c3c] bg-linear-to-b from-[#9c9c9c] to-[#888]'}`}
            >
              <Icon className="w-4 h-4">{b.icon}</Icon>
            </button>
          ))}
          <button type="button" disabled aria-label="Filter legend by expression" className={`${smallButton} ml-auto w-[36px] border-[#3c3c3c] bg-[#6a6a6a]`}>
            <svg viewBox="0 0 30 20" className="w-[30px] h-5" aria-hidden="true"><path d="M9 11h7l-2 3v4h-3v-4z" fill="#949494" /><path d="M4 7h6" stroke="#606060" /><circle cx="26" cy="10" r="1.500" fill="#b5b5b5" /></svg>
          </button>
        </div>
        <div className="mt-[6px] flex flex-col gap-[6px]">
          <LabelledCheck id="linked-map" label="Only show items inside linked map" />
          <LabelledCheck id="atlas-feature" label="Only show items inside current atlas feature" />
        </div>
      </div>

      <div className="mt-[17px] flex flex-col gap-[7px]">
        {closedSections.map((s) => <SectionHeader key={s.title} {...s} />)}
      </div>
    </div>
    <div className="w-[9px] mr-px flex flex-col bg-[#3a3a3a]">
      <div className="flex-1 mb-1 bg-[#747474] border border-[#414141]" />
    </div>
  </div>
);

const App = () => {
  const [topTab, setTopTab] = useState(0);
  const [bottomTab, setBottomTab] = useState(1);

  return (
    <div className="min-h-screen flex flex-col bg-[#717171] text-[#1b1b1b] text-[11px] leading-4 font-['Noto_Sans',sans-serif]">
      <header className="grid grid-cols-2 h-6 border-t border-[#4a4a4a] bg-[#1e1e1e] text-center leading-[22px]">
        <div className="border-r border-black text-[#8c8c8c]">*demo - QGIS</div>
        <div className="bg-[#232323] text-[#d0d0d0]">*sapp</div>
      </header>

      <div className="flex items-center h-[35px] pl-1" role="toolbar" aria-label="Layout">
        {mainTools.map((t, i) => {
          if (t.sep) return <span key={i} className={`flex justify-center shrink-0 ${t.thin ? 'w-[3px]' : 'w-[5px]'}`}><span className="w-px h-[14px] bg-[#505050]" /></span>;
          if (t.combo) {
            return (
              <div key={i} className="relative w-[76px] mx-px shrink-0">
                <select aria-label="Atlas page" disabled className="appearance-none w-full h-[27px] rounded-[3px] border border-[#333] pl-[6px] text-[#999] opacity-100">
                  <option>1</option>
                </select>
                <span className="absolute right-[5px] top-3 w-[3px] h-[3px] rounded-full bg-[#c4c4c4]" />
              </div>
            );
          }
          return <ToolButton key={i} tool={t} />;
        })}
      </div>
      <div className="flex items-center h-[37px] pl-1" role="toolbar" aria-label="View">
        {viewTools.map((t) => <ToolButton key={t.name} tool={t} />)}
      </div>

      <main className="flex flex-1">
        <div className="flex flex-col items-center w-9 shrink-0 pt-1" role="toolbar" aria-label="Toolbox">
          <span className="w-[10px] h-px bg-[#9a9a9a]" />
          {sideTools.map((t) => <ToolButton key={t.name} tool={t} />)}
        </div>

        <div className="flex-1 min-w-0 flex flex-col">
          <div className="flex h-4 pl-[15px]"><HorizontalRuler /></div>
          <div className="flex flex-1">
            <VerticalRuler />
            <div className="relative flex-1 overflow-hidden bg-[#d7d7d7]">
              <div className="absolute left-[93px] top-[75px] w-[1494px] h-[1057px] bg-white shadow-[8px_8px_0_#949494]">
                <MapItem />
                <LegendItem />
              </div>
            </div>
          </div>
        </div>

        <aside className="w-[668px] shrink-0 pl-[5px] flex flex-col">
          <Tabs
            tabs={[{ name: 'Items', width: 'w-[56px]' }, { name: 'Undo History', width: 'w-[95px]' }]}
            active={topTab}
            onChange={setTopTab}
          />
          <DockTitle>Items</DockTitle>
          <div className="mt-px pr-px"><ItemsPanel /></div>
          <div className="mt-[5px]">
            <Tabs
              tabs={[{ name: 'Layout', width: 'w-[61px]' }, { name: 'Item Properties', width: 'w-[108px]' }, { name: 'Guides', width: 'w-[61px]' }]}
              active={bottomTab}
              onChange={setBottomTab}
            />
          </div>
          <DockTitle>Item Properties</DockTitle>
          <div className="h-5 pl-[5px] bg-[#c8c8c8] font-bold text-black leading-5">Legend</div>
          <PropertiesPanel />
        </aside>
      </main>

      <footer className="flex items-center h-[29px] pl-[6px] pr-[2px]">
        <span>1 item selected</span>
        <span className="ml-auto">x: 315.562 mm</span>
        <span className="ml-[23px]">y: 130.661 mm</span>
        <span className="ml-[23px]">page: 1</span>
        <Combo label="Zoom level" options={['189.3%']} className="ml-[63px] w-[122px]" />
        <input
          type="range"
          aria-label="Zoom"
          defaultValue="22"
          className="ml-[6px] appearance-none w-[92px] h-2 border border-[#333] bg-linear-to-r from-[#c4c4c4] from-20% to-[#383838] to-20% [&::-webkit-slider-thumb]:appearance-none [&::-webkit-slider-thumb]:w-5 [&::-webkit-slider-thumb]:h-[10px] [&::-webkit-slider-thumb]:rounded-[2px] [&::-webkit-slider-thumb]:bg-[#b0b0b0] [&::-webkit-slider-thumb]:border [&::-webkit-slider-thumb]:border-[#333]"
        />
      </footer>
    </div>
  );
};

export default App;
